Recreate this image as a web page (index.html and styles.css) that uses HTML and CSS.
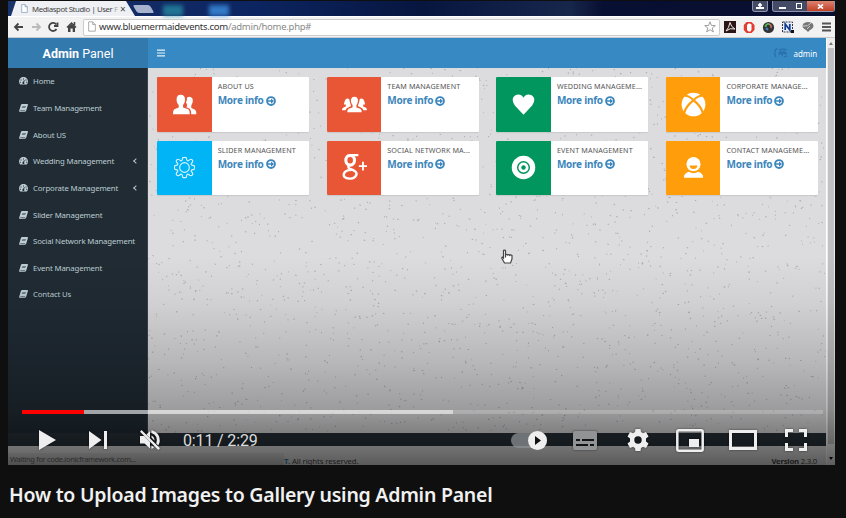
FILE: index.html
```html
<!DOCTYPE html>
<html lang="en">
<head>
<meta charset="utf-8">
<title>How to Upload Images to Gallery using Admin Panel</title>
<link rel="stylesheet" href="styles.css">
</head>
<body>
<svg width="0" height="0" class="defs" aria-hidden="true">
  <symbol id="dash" viewBox="0 0 18 14"><path fill="currentColor" fill-rule="evenodd" d="M2.500 14A9 9 0 1 1 15.500 14ZM8 2h2v2H8zM3 4h2v2H3zM13 4h2v2h-2zM1.700 8.500h2v2h-2zM14.300 8.500h2v2h-2zM10 5L8.200 9A2 2 0 1 0 10.200 9.500L11.400 5.500Z"/></symbol>
  <symbol id="book" viewBox="0 0 18 16"><path fill="currentColor" fill-rule="evenodd" d="M6 0H17Q18.300 .5 17.800 2L14.500 13Q14 14.500 12.500 14.500H3.500Q2.500 14.500 2.600 15H13.500L12.800 16H2.500Q0 16 .3 13.500L4 1.500Q4.500 0 6 0ZM7 4L6.600 5H13.500L14 4ZM6 7L5.600 8H12.500L13 7ZM2.800 12L2.400 13.200H12L12.400 12Z"/></symbol>
  <symbol id="more" viewBox="0 0 16 16"><circle cx="8" cy="8" r="6.300" fill="none" stroke="currentColor" stroke-width="3"/><path fill="currentColor" d="M3 6.800h5V3.800L12.800 8L8 12.200V9.200H3Z"/></symbol>
  <symbol id="page" viewBox="0 0 12 16"><path d="M1 1H7L11 5V15H1ZM7 1V5H11" fill="#fff" stroke="currentColor" stroke-width="1.200"/></symbol>
</svg>
<main class="watch">
  <section class="player">
    <div class="browser">
      <div class="tabs">
        <div class="tab"><svg class="fav"><use href="#page"/></svg><span class="tab-title">Mediaspot Studio | User <em>F</em></span><span class="tab-x">×</span></div>
        <i class="newtab"></i><i class="glow teal"></i><i class="glow blue"></i>
        <div class="win"><i class="user"></i><div class="group"><i class="min"></i><i class="max"></i><i class="close"><svg viewBox="0 0 8 6"><path d="M1 .5L7 5.500M7 .5L1 5.500" stroke="#fff" stroke-width="2"/></svg></i></div></div>
      </div>
      <div class="toolbar">
        <svg class="nav" viewBox="0 0 64 16" fill="none" stroke="#444" stroke-width="1.800"><path d="M10 8H2M5.500 4.500L2 8L5.500 11.500"/><path stroke="#bbb" d="M19 8H27M23.500 4.500L27 8L23.500 11.500"/><path d="M43.500 10A4 4 0 1 1 43.200 5.500M44.500 3.500V7H41"/><path d="M54 8.500L58.500 4L63 8.500M61.500 3V6" stroke-width="1.500"/><path fill="#444" stroke="none" d="M55 8L58.500 5L62 8V13H59.700V9.500H57.500V13H55Z"/></svg>
        <div class="address"><svg class="page"><use href="#page"/></svg><span class="url">www.bluemermaidevents.com<em>/admin/home.php#</em></span><svg class="star" viewBox="0 0 12 12"><path d="M6 .8L7.400 4.400L11.300 4.600L8.200 7L9.300 10.900L6 8.700L2.700 10.900L3.800 7L.7 4.600L4.600 4.400Z" fill="#fff" stroke="#888" stroke-width=".8"/></svg></div>
        <svg class="ext" viewBox="0 0 110 16"><rect x="0" y="2" width="12" height="12" fill="#2b1515"/><path d="M2 12Q5 9 6 3.500Q7 8 11 10Q6 8.500 2 12" fill="none" stroke="#eee"/><path d="M22.500 3H27.500L30.500 6V11L27.500 14H22.500L19.800 11V6Z" fill="#e33b30"/><path d="M23 6V11L24.500 12.500H26.500L27.500 10.500V5.500L26 4.500H24.500Z" fill="#fff"/><circle cx="44.500" cy="8.500" r="5.600" fill="#333"/><path d="M41.500 8A3 3 0 0 1 45 5" stroke="#56b45c" stroke-width="1.800" fill="none"/><path d="M45 5A3 3 0 0 1 47 9" stroke="#c97a55" stroke-width="1.500" fill="none"/><path d="M42 9L44 11" stroke="#3b83c8" stroke-width="2"/><rect x="58.500" y="3" width="10" height="10" fill="#e8edf5" stroke="#334" stroke-dasharray="2 1"/><path d="M61.200 11V5L65.800 11V5" stroke="#123c91" stroke-width="1.700" fill="none"/><rect x="67" y="11" width="3" height="3" fill="#111"/><ellipse cx="84" cy="7" rx="5.500" ry="4" fill="#777"/><path d="M80 9L84 13L89 8L88 4Z" fill="#777"/><path d="M79 7Q84 8 87 4M83 10L86 7" fill="none" stroke="#ccc"/><path d="M98 4.500H107M98 8H107M98 11.500H107" stroke="#555" stroke-width="1.800"/></svg>
      </div>
      <div class="page-view">
        <div class="site">
          <header class="site-head"><div class="brand"><span><b>Admin</b> Panel</span></div><svg class="burger" viewBox="0 0 8 8"><path d="M0 1.200H8M0 4H8M0 6.800H8" stroke="#e8f2f8" stroke-width="1.200"/></svg><svg class="avatar" viewBox="0 0 16 12"><path d="M4 1Q0 5 3 10M6 3Q9 1 14 3M5 6H14M6 8L8 4L9 8L11 4L13 8M11 10L14 9" fill="none" stroke="#2466a3" stroke-width="1.200" opacity=".75"/></svg><span class="admin">admin</span></header>
          <div class="site-body">
            <nav class="side">
              <a><svg><use href="#dash"/></svg><span>Home</span></a>
              <a><svg><use href="#book"/></svg><span>Team Management</span></a>
              <a><svg><use href="#book"/></svg><span>About US</span></a>
              <a><svg><use href="#dash"/></svg><span>Wedding Management</span><b class="chev"></b></a>
              <a><svg><use href="#dash"/></svg><span>Corporate Management</span><b class="chev"></b></a>
              <a><svg><use href="#book"/></svg><span>Slider Management</span></a>
              <a><svg><use href="#book"/></svg><span>Social Network Management</span></a>
              <a><svg><use href="#book"/></svg><span>Event Management</span></a>
              <a><svg><use href="#book"/></svg><span>Contact Us</span></a>
            </nav>
            <div class="content">
              <svg class="speckles" viewBox="0 0 679 366"><path id="dots" stroke="#85858f" stroke-width="1.100" opacity=".55"/></svg>
              <div class="cards">
                <article class="card"><div class="tile red"><svg viewBox="0 0 28 28"><path fill="#fff" d="M10 4Q15 4 14.500 10Q14 13 12.500 14.500V17L18 19Q19.500 20 19.500 24H2Q2 20 3.500 19L8 17V14.500Q6 13 5.800 10Q5.300 4 10 4Z"/><path fill="#fff" d="M16.500 7Q19 5 21.500 7Q23.500 9 22 13L21 15V17.500L25 19.500Q26.500 21 26.300 24H21Q21 19 18.500 18L16 16.800Q17.500 15 15.500 12Q17 10 16.500 7Z"/></svg></div><div class="info"><span>ABOUT US</span><b>More info <svg><use href="#more"/></svg></b></div></article>
                <article class="card"><div class="tile red"><svg viewBox="0 0 28 28"><path fill="#fff" d="M14 6Q18 6 17.500 11Q17 13.500 16 14.500V17L20 18.500Q21.500 19.500 21.500 22H6.500Q6.500 19.500 8 18.500L12 17V14.500Q10.500 13 10.300 11Q10 6 14 6Z"/><path fill="#fff" d="M6 8Q9 7 9 11L10.500 15.500L6 18Q5 19 5 20H1Q1 17.500 2.500 17L5 16V14L3 14Q4 8 6 8ZM22 8Q19 7 19 11L17.500 15.500L22 18Q23 19 23 20H27Q27 17.500 25.500 17L23 16V14L25 14Q24 8 22 8Z"/></svg></div><div class="info"><span>TEAM MANAGEMENT</span><b>More info <svg><use href="#more"/></svg></b></div></article>
                <article class="card"><div class="tile green"><svg viewBox="0 0 28 28"><path fill="#fff" d="M14 24.500L5 15Q0 8 5.500 4.500Q11 2 14 7Q17 2 22.500 4.500Q28 8 23 15Z"/></svg></div><div class="info"><span>WEDDING MANAGEME...</span><b>More info <svg><use href="#more"/></svg></b></div></article>
                <article class="card"><div class="tile orange"><svg viewBox="0 0 28 28"><circle cx="14" cy="14" r="12.300" fill="#fff"/><path d="M4.500 5Q9 4.500 14 9.500Q19 4.500 23.500 5M13.500 10Q6 16 4.500 22.500M14.500 10Q22 16 23.500 22.500" fill="none" stroke="#ff9d0b" stroke-width="2.200"/></svg></div><div class="info"><span>CORPORATE MANAGE...</span><b>More info <svg><use href="#more"/></svg></b></div></article>
                <article class="card"><div class="tile aqua"><svg viewBox="0 0 28 28" fill="none" stroke="#d8f3ff" stroke-width="1.200"><circle cx="14" cy="14" r="5"/><path stroke-linejoin="round" d="M12 4Q14 3 16 4Q16 7.500 18 7Q20.500 4.500 22 6Q23.500 7.500 21 10Q20.500 12 24 12Q25 14 24 16Q20.500 16 21 18Q23.500 20.500 22 22Q20.500 23.500 18 21Q16 20.500 16 24Q14 25 12 24Q12 20.500 10 21Q7.500 23.500 6 22Q4.500 20.500 7 18Q7.500 16 4 16Q3 14 4 12Q7.500 12 7 10Q4.500 7.500 6 6Q7.500 4.500 10 7Q12 7.500 12 4Z"/></svg></div><div class="info"><span>SLIDER MANAGEMENT</span><b>More info <svg><use href="#more"/></svg></b></div></article>
                <article class="card"><div class="tile red"><svg viewBox="0 0 28 28" fill="none" stroke="#fff"><ellipse cx="9.500" cy="6.500" rx="4.500" ry="5" stroke-width="3.200"/><path d="M10 1H18M9 11Q6 14 9.500 15.500Q17 18 16 21.500Q14.500 26 8.500 25.500Q2 25 3 20.500Q4.500 16.500 11 16.500" stroke-width="2.500"/><path d="M18.500 12.500H27M22.800 8V17" stroke-width="1.900"/></svg></div><div class="info"><span>SOCIAL NETWORK MA...</span><b>More info <svg><use href="#more"/></svg></b></div></article>
                <article class="card"><div class="tile green"><svg viewBox="0 0 28 28"><circle cx="14" cy="14" r="12.200" fill="#fff"/><circle cx="14" cy="14" r="6" fill="none" stroke="#00965e" stroke-width="1.500"/><circle cx="14" cy="14" r="2.300" fill="#00965e"/></svg></div><div class="info"><span>EVENT MANAGEMENT</span><b>More info <svg><use href="#more"/></svg></b></div></article>
                <article class="card"><div class="tile orange"><svg viewBox="0 0 28 28"><ellipse cx="14" cy="10.500" rx="7.300" ry="7.500" fill="#fff"/><path d="M10 12H18Q18 15.500 14 15.500Q10 15.500 10 12" fill="#ff9d0b"/><path fill="#fff" d="M4 24.500Q4 20 9 18.500Q14 21.500 19 18.500Q24 20 24 24.500Z"/></svg></div><div class="info"><span>CONTACT MANAGEME...</span><b>More info <svg><use href="#more"/></svg></b></div></article>
              </div>
            </div>
          </div>
          <div class="band"></div>
          <footer class="foot"><span class="rights"><b>T.</b> All rights reserved.</span><span class="version"><b>Version</b> 2.3.0</span></footer>
        </div>
        <div class="scroll"><i class="up"></i><i class="thumb"></i><i class="down"></i></div>
      </div>
    </div>
    <svg class="cursor" viewBox="0 0 12 16"><path d="M4.500 8.500V2Q4.500 1 3.500 1Q2.500 1 2.500 2V9L1.500 8Q.5 8 1 9.500L3.500 14H9.500L11 10V6.500Q9.500 5.500 8.800 6.500Q7.500 5 6.500 6Q5.500 5 4.500 5.500" fill="#fff" stroke="#444" stroke-width="1.200"/></svg>
    <div class="shade"></div>
    <div class="status">Waiting for code.ionicframework.com...</div>
    <div class="controls">
      <div class="progress"><i class="buffered"></i><i class="played"></i></div>
      <div class="buttons">
        <svg class="play" viewBox="0 0 17 20"><path d="M0 0L17 10L0 20Z"/></svg>
        <svg class="next" viewBox="0 0 18 18"><path d="M0 0L12.500 9L0 18ZM15 0H18V18H15Z"/></svg>
        <svg class="mute" viewBox="0 0 20 20"><path d="M0 6H4L10 12V18.500L4.500 13.500H0ZM10 1V8L6.500 4.500ZM11.500 5.500Q14.500 7 14.500 10.500L11.500 7.500ZM11.500 0Q20 2.500 19.800 11Q19.500 13.500 18.300 15.500L16.300 13.500Q18.500 5.500 11.500 3ZM1.500 0L20 18.300L18.300 20L0 1.700ZM11.500 15.500L14 17.500L11.500 19Z"/></svg>
        <span class="time">0:11 / 2:29</span>
        <span class="auto"><i><svg viewBox="0 0 6 9"><path d="M0 0L6 4.500L0 9Z"/></svg></i></span>
        <svg class="cc" viewBox="0 0 24 19"><path fill-rule="evenodd" d="M2 0H22Q24 0 24 2V17Q24 19 22 19H2Q0 19 0 17V2Q0 0 2 0ZM3 8V10H7V8ZM9 8V10H21V8ZM3 13V15H15V13ZM17 13V15H21V13Z"/></svg>
        <svg class="gear" viewBox="0 0 22 22"><path fill-rule="evenodd" d="M8.500 0H13.500L14 3L16 4.200L19 3L21.500 7.500L19 9.500V12.500L21.500 14.500L19 19L16 17.800L14 19L13.500 22H8.500L8 19L6 17.800L3 19L.5 14.500L3 12.500V9.500L.5 7.500L3 3L6 4.200L8 3ZM11 7.300A3.700 3.700 0 1 0 11 14.700A3.700 3.700 0 1 0 11 7.300Z"/></svg>
        <svg class="mini" viewBox="0 0 28 23"><rect x="1.300" y="1.300" width="25.400" height="20.400" rx="1.500" fill="none" stroke="#eee" stroke-width="2.500"/><path d="M13 10H23V18H13Z"/></svg>
        <svg class="theater" viewBox="0 0 28 20"><rect x="1.500" y="1.500" width="25" height="17" fill="none" stroke="#eee" stroke-width="3"/></svg>
        <svg class="full" viewBox="0 0 22 22"><path d="M1.500 8V1.500H8M14 1.500H20.500V8M20.500 14V20.500H14M8 20.500H1.500V14" fill="none" stroke="#eee" stroke-width="3"/></svg>
      </div>
    </div>
  </section>
  <h1 class="title">How to Upload Images to Gallery using Admin Panel</h1>
</main>
<script src="speckles.js"></script>
</body>
</html>
```
FILE: styles.css
```css
* { box-sizing: border-box; }
body { margin: 0; width: 846px; height: 518px; overflow: hidden; background: #0f0f0f; font-family: "Noto Sans", "Open Sans", sans-serif; }
svg { display: block; flex: none; }
i { font-style: normal; }
.defs { position: absolute; }
.watch { padding: 1px 11px 0 8px; }
.player { position: relative; width: 827px; height: 464px; overflow: hidden; background: #222; }
.browser { display: flex; flex-direction: column; height: 100%; }

.tabs { display: flex; height: 15px; padding-left: 3px; background: linear-gradient(90deg, #19336a, #0c2460 30%, #07163f 50%, #17264b 68%, #070f32 72%, #090f30); }
.tab { display: flex; align-items: center; width: 124px; height: 15px; padding-left: 10px; background: #eef0f3; clip-path: polygon(5px 0, 115px 0, 124px 100%, 0 100%); font-size: 7.800px; color: #444; white-space: nowrap; }
.fav { width: 7px; height: 9px; color: #7895b8; margin-right: 4px; }
.tab-title { width: 84px; letter-spacing: -.4px; }
.tab-title em { font-style: normal; color: #aaa; }
.tab-x { margin-left: 4px; font-size: 10px; }
.newtab { width: 17px; height: 8px; margin: 4px 0 0 0; background: #a5b3ce; transform: skewX(30deg); border-radius: 2px; }
.glow { width: 20px; height: 11px; margin: 4px 0 0 11px; filter: blur(2px); background: #2588a0; opacity: .8; }
.glow.blue { margin-left: 26px; background: #3b8ee0; }
.win { display: flex; margin-left: auto; gap: 4px; }
.user { width: 16px; height: 11px; border: 1px solid #8d93aa; border-top: 0; border-radius: 0 0 3px 3px; background: linear-gradient(#fff, #fff) 50% 6px/8px 2px no-repeat, radial-gradient(circle at 50% 4px, #fff 1.500px, transparent 2px), #444b66; }
.group { display: flex; width: 63px; height: 11px; border: 1px solid #8d93aa; border-top: 0; border-radius: 0 0 3px 3px; background: #444b66; }
.min { width: 18px; background: linear-gradient(#fff, #fff) 50% 6px/7px 2px no-repeat; }
.max { width: 6px; height: 6px; margin: 2px 5px; border: 1.500px solid #fff; }
.close { display: grid; place-items: center; flex: 1; background: linear-gradient(#dc8272, #c24024); }
.close svg { width: 7px; height: 5px; }

.toolbar { display: flex; align-items: center; height: 22px; background: #f2f2f2; border-top: 1px solid #fff; border-bottom: 1px solid #c7cbd0; }
.nav { width: 64px; height: 16px; margin-left: 5px; }
.address { display: flex; align-items: center; width: 637px; height: 17px; margin-left: 6px; padding: 0 3px 1px 4px; background: #fff; border: 1px solid #ccc; border-radius: 2px; }
.page { width: 8px; height: 11px; color: #999; }
.url { margin-left: 3px; font-size: 9.500px; color: #333; letter-spacing: -.27px; }
.url em { font-style: normal; color: #888; }
.star { width: 12px; height: 12px; margin-left: auto; }
.ext { width: 110px; height: 16px; margin-left: 4px; }

.page-view { display: flex; flex: 1; min-height: 0; }
.site { display: flex; flex-direction: column; width: 818px; flex: none; }
.site-head { display: flex; align-items: center; height: 30px; background: #3689c3; color: #fff; }
.brand { display: grid; place-items: center; width: 140px; height: 30px; background: #3279ad; font: 12.500px Roboto, sans-serif; }
.burger { width: 8px; height: 8px; margin-left: 9px; }
.avatar { width: 16px; height: 12px; margin-left: auto; }
.admin { margin: 0 9px 0 5px; font-size: 8px; letter-spacing: -.1px; }
.site-body { display: flex; flex: 1; min-height: 0; }
.side { width: 140px; flex: none; background: #202b34; border-right: 1px solid #37424a; }
.side a { display: flex; align-items: center; height: 26.650px; padding-left: 11px; color: #bdcdd2; font-size: 7.800px; letter-spacing: -.15px; white-space: nowrap; }
.side svg { width: 9px; height: 8px; margin-right: 5px; }
.chev { width: 4px; height: 4px; margin: 0 9px 0 auto; border: solid #b8c7ce; border-width: 0 0 1px 1px; transform: rotate(45deg); }
.content { position: relative; flex: 1; background: #dcdcde; }
.speckles { position: absolute; inset: 0; width: 100%; height: 100%; }
.cards { position: relative; display: grid; grid-template-columns: repeat(4, 152px); gap: 9px 17.600px; padding: 9px 0 0 9.200px; }
.card { display: flex; height: 54.500px; border-radius: 1px; overflow: hidden; background: #fff; box-shadow: 0 1px 1px #c8c8ca; }
.tile { display: grid; place-items: center; width: 54.500px; flex: none; }
.tile svg { width: 27px; height: 27px; }
.red { background: #e85636; }
.green { background: #00965e; }
.orange { background: #ff9d0b; }
.aqua { background: #00b4f5; }
.info { display: flex; flex-direction: column; padding: 4px 0 0 6px; font-size: 7.200px; line-height: 11px; color: #555; white-space: nowrap; }
.info span { letter-spacing: .13px; }
.info b { display: flex; align-items: center; gap: 2px; margin-top: 1px; font-size: 10px; line-height: 15px; letter-spacing: -.25px; color: #3c86bb; }
.info b svg { width: 10px; height: 10px; }
.band { height: 13px; background: #28323a; }
.foot { display: flex; height: 19px; padding: 9px 9px 0 276px; background: #e2e2e2; font-size: 7.800px; line-height: 12px; letter-spacing: -.1px; color: #444; white-space: nowrap; }
.rights b { color: #367fa9; }
.version { margin-left: auto; letter-spacing: -.25px; }
.scroll { display: flex; flex-direction: column; align-items: center; flex: 1; background: #ededed; border-left: 1px solid #fff; }
.up, .down { border: solid transparent; border-width: 0 2px 3px; border-bottom-color: #777; margin: 4px 0 3px; }
.thumb { width: 6px; height: 396px; background: #c1c1c3; }
.down { border-width: 3px 2px 0; border-top-color: #111; margin-top: 13px; }

.cursor { position: absolute; left: 493px; top: 248px; width: 12px; height: 16px; }
.shade { position: absolute; inset: 0; background: linear-gradient(transparent 55%, rgba(0,0,0,.05) 65%, rgba(0,0,0,.17) 78%, rgba(0,0,0,.29) 88%, rgba(0,0,0,.44) 94%, rgba(0,0,0,.6)); }
.status { position: absolute; left: 0; bottom: 0; width: 276px; height: 13px; padding-left: 2px; background: linear-gradient(#656565, #505050); color: #2c2c2c; font-size: 7.500px; line-height: 12px; letter-spacing: -.33px; border-top: 1px solid #6c6c6c; }
.controls { position: absolute; left: 14px; right: 12px; bottom: 0; height: 56px; }
.progress { position: relative; height: 4px; margin-top: 1px; background: rgba(255,255,255,.2); }
.progress i { position: absolute; left: 0; top: 0; height: 4px; width: 431px; background: rgba(255,255,255,.5); }
.progress .played { width: 62px; background: #f00; }
.buttons { display: flex; align-items: center; height: 50px; padding: 2px 16px 0 17px; fill: #eee; }
.buttons svg { filter: drop-shadow(0 0 1px rgba(0,0,0,.5)); }
.play { width: 17px; height: 20px; }
.next { width: 18px; height: 18px; margin-left: 33px; }
.mute { width: 20px; height: 20px; margin-left: 33px; }
.time { margin-left: 23px; color: #ddd; font: 16px Roboto, sans-serif; white-space: nowrap; letter-spacing: -.15px; }
.auto { display: flex; justify-content: flex-end; align-items: center; width: 36px; height: 15px; margin-left: auto; border-radius: 8px; background: rgba(140,144,148,.75); }
.auto i { display: grid; place-items: center; width: 19px; height: 19px; border-radius: 50%; background: #eee; }
.auto svg { width: 6px; height: 9px; fill: #111; filter: none; }
.cc { width: 24px; height: 19px; margin-left: 26px; fill: #919395; }
.gear { width: 22px; height: 22px; margin-left: 30px; }
.mini { width: 28px; height: 23px; margin-left: 27px; }
.theater { width: 28px; height: 20px; margin-left: 25px; }
.full { width: 22px; height: 22px; margin-left: 28px; }
.title { margin: 16px 0 0 1px; color: #f1f1f1; font: 600 19.500px/28px "Noto Sans", sans-serif; white-space: nowrap; letter-spacing: -.25px; }
```
FILE: speckles.js
```js
// Scatter fine granite-like specks over the content background.
let seed = 7;
const rand = () => (seed = (seed * 16807) % 2147483647) / 2147483647;
let d = "";
for (let n = 0; n < 2000; n++) {
  d += `M${(rand() * 679).toFixed(1)} ${(rand() * 366).toFixed(1)}l${(0.6 + rand() * 0.9).toFixed(1)} ${(rand() - 0.3).toFixed(1)}`;
}
document.getElementById("dots").setAttribute("d", d);
```
